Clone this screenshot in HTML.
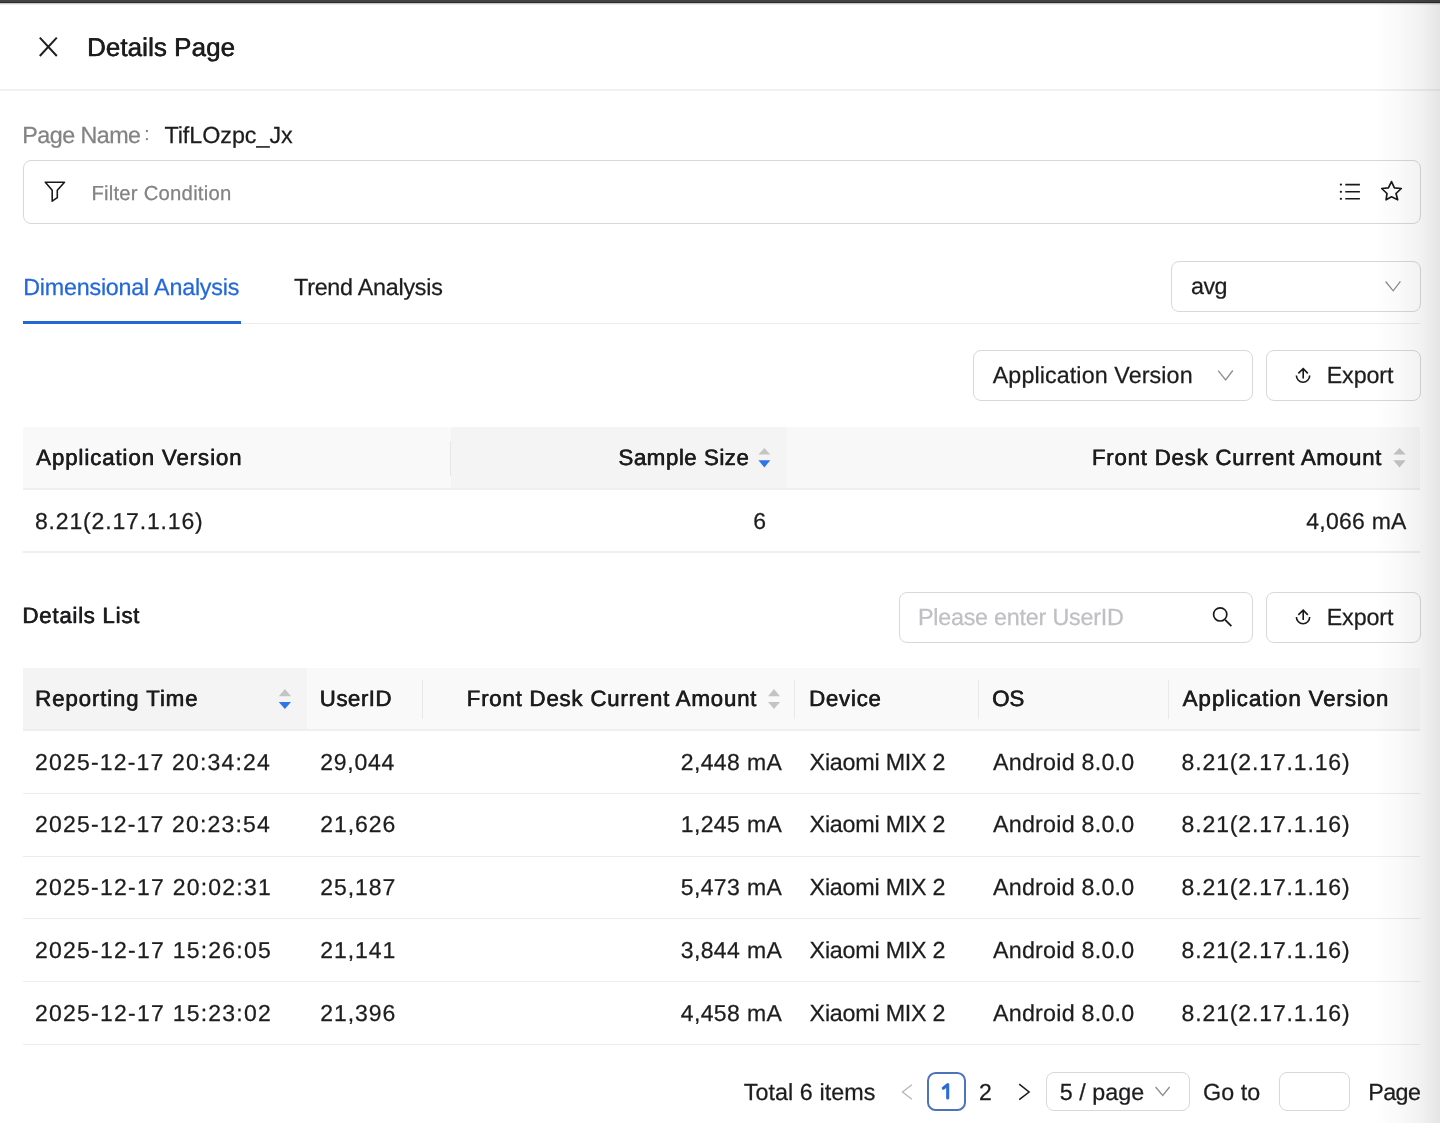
<!DOCTYPE html>
<html><head><meta charset="utf-8"><title>Details Page</title>
<style>
html,body{margin:0;padding:0;background:#fff;}
body{width:1440px;height:1123px;position:relative;overflow:hidden;font-family:"Liberation Sans",sans-serif;}
.t{position:absolute;white-space:nowrap;font-family:"Liberation Sans",sans-serif;text-rendering:geometricPrecision;}
.t{-webkit-text-stroke:0.25px currentColor;}
.m{-webkit-text-stroke:0.6px currentColor;}
.b{-webkit-text-stroke:0.35px currentColor;text-shadow:0.5px 0 0 currentColor;}
.r{position:absolute;box-sizing:border-box;}
.box{position:absolute;box-sizing:border-box;border:1.6px solid #d8d8d8;border-radius:8px;background:#fff;}
svg{position:absolute;left:0;top:0;}
</style></head><body>
<!-- top dark bar -->
<div class="r" style="left:0;top:0;width:1440px;height:5px;background:linear-gradient(#444 0,#444 2px,#2c2c2c 2px,#2c2c2c 3px,#c8c8c8 3px,#c8c8c8 3.6px,#fff 5px);"></div>
<!-- header border -->
<div class="r" style="left:0;top:89px;width:1440px;height:2px;background:#f1f1f1;"></div>
<!-- filter box -->
<div class="box" style="left:22.7px;top:160px;width:1398.1px;height:64px;border-radius:8px;"></div>
<!-- tabs line -->
<div class="r" style="left:23px;top:322.5px;width:1397px;height:1.5px;background:#ececec;"></div>
<div class="r" style="left:23px;top:321px;width:218px;height:3px;background:#2468d8;"></div>
<!-- avg select -->
<div class="box" style="left:1171px;top:261px;width:250px;height:51px;"></div>
<!-- app version select -->
<div class="box" style="left:973px;top:350px;width:280px;height:51px;"></div>
<!-- export 1 -->
<div class="box" style="left:1266px;top:350px;width:155px;height:51px;"></div>
<!-- table 1 -->
<div class="r" style="left:23px;top:427px;width:428px;height:61px;background:#f9f9f9;"></div>
<div class="r" style="left:451px;top:427px;width:336px;height:61px;background:#f4f4f4;"></div>
<div class="r" style="left:787px;top:427px;width:633px;height:61px;background:#f8f8f8;"></div>
<div class="r" style="left:450px;top:441px;width:1px;height:35px;background:#e6e6e6;"></div>
<div class="r" style="left:23px;top:488px;width:1397px;height:2px;background:#efefef;"></div>
<div class="r" style="left:23px;top:551px;width:1397px;height:2px;background:#efefef;"></div>
<!-- search + export 2 -->
<div class="box" style="left:899px;top:592px;width:354px;height:51px;"></div>
<div class="box" style="left:1266px;top:592px;width:155px;height:51px;"></div>
<!-- table 2 -->
<div class="r" style="left:23px;top:668px;width:284px;height:61px;background:#f4f4f4;"></div>
<div class="r" style="left:307px;top:668px;width:1113px;height:61px;background:#f9f9f9;"></div>
<div class="r" style="left:422px;top:680px;width:1px;height:39px;background:#e9e9e9;"></div>
<div class="r" style="left:794px;top:680px;width:1px;height:39px;background:#e9e9e9;"></div>
<div class="r" style="left:978px;top:680px;width:1px;height:39px;background:#e9e9e9;"></div>
<div class="r" style="left:1168px;top:680px;width:1px;height:39px;background:#e9e9e9;"></div>
<div class="r" style="left:23px;top:729px;width:1397px;height:2px;background:#efefef;"></div>
<div class="r" style="left:23px;top:792.7px;width:1397px;height:1.2px;background:#ececec;"></div>
<div class="r" style="left:23px;top:855.5px;width:1397px;height:1.2px;background:#ececec;"></div>
<div class="r" style="left:23px;top:918.3px;width:1397px;height:1.2px;background:#ececec;"></div>
<div class="r" style="left:23px;top:981.3px;width:1397px;height:1.2px;background:#ececec;"></div>
<div class="r" style="left:23px;top:1044px;width:1397px;height:1.2px;background:#ececec;"></div>
<!-- pagination -->
<div class="box" style="left:927px;top:1072px;width:39px;height:39px;border:2px solid #4d74bb;border-radius:8.6px;"></div>
<div class="box" style="left:1046px;top:1072px;width:144px;height:39px;border-radius:8px;"></div>
<div class="box" style="left:1279px;top:1072px;width:71px;height:39px;border-radius:8px;"></div>

<svg width="1440" height="1123" viewBox="0 0 1440 1123" fill="none">
 <!-- close X -->
 <path d="M39.8 37.6 L56.8 56 M56.8 37.6 L39.8 56" stroke="#1f1f1f" stroke-width="2"/>
 <circle cx="146.9" cy="131" r="1.2" fill="#8a8a8a"/><circle cx="146.9" cy="139.1" r="1.2" fill="#8a8a8a"/>
 <!-- filter -->
 <path d="M45.3 182.2 L64.5 182.2 L57.3 190.3 L57.3 197.7 L52.2 201.2 L52.2 190.3 Z" stroke="#1a1a1a" stroke-width="1.6" stroke-linejoin="round"/>
 <!-- list -->
 <g fill="#1a1a1a"><circle cx="1340.9" cy="184.6" r="1.15"/><circle cx="1340.9" cy="191.8" r="1.15"/><circle cx="1340.9" cy="198.8" r="1.15"/></g>
 <path d="M1345.3 184.6 H1359.9 M1345.3 191.8 H1359.9 M1345.3 198.8 H1359.9" stroke="#1a1a1a" stroke-width="1.6"/>
 <!-- star -->
 <path d="M1391.5 181.6 L1394.4 187.8 L1401.3 188.5 L1396 193.5 L1397.7 199.8 L1391.5 196.8 L1386.1 199.8 L1387 193.5 L1381.7 188.5 L1388.4 187.8 Z" stroke="#1a1a1a" stroke-width="1.7" stroke-linejoin="round"/>
 <!-- avg chevron -->
 <path d="M1385.6 281.5 L1393.2 290.8 L1400.4 281.4" stroke="#8c8c8c" stroke-width="1.3"/>
 <!-- app version chevron -->
 <path d="M1218.2 370.6 L1225.6 379.9 L1232.8 370.5" stroke="#8c8c8c" stroke-width="1.3"/>
 <!-- upload icon 1 -->
 <g stroke="#1a1a1a" stroke-width="1.6" stroke-linecap="butt">
  <path d="M1298.3 373.4 L1303.2 368.6 L1307.8 373.4 M1303.2 369.2 V378.5"/>
  <path d="M1296.4 375.6 A6.65 6.65 0 0 0 1309.7 375.6"/>
 </g>
 <!-- upload icon 2 -->
 <g stroke="#1a1a1a" stroke-width="1.6" transform="translate(0,241.5)">
  <path d="M1298.3 373.4 L1303.2 368.6 L1307.8 373.4 M1303.2 369.2 V378.5"/>
  <path d="M1296.4 375.6 A6.65 6.65 0 0 0 1309.7 375.6"/>
 </g>
 <!-- search -->
 <circle cx="1220.2" cy="614.4" r="6.6" stroke="#1a1a1a" stroke-width="1.7"/>
 <path d="M1225.2 619.9 L1231.4 626.1" stroke="#1a1a1a" stroke-width="1.8"/>
 <!-- sort icons -->
 <path d="M758.4 454.5 H770.3 L764.35 448.1 Z" fill="#c4c4c4"/>
 <path d="M758.4 460.2 H770.3 L764.35 467.4 Z" fill="#2f74e8"/>
 <path d="M1393.3 454.5 H1405.7 L1399.5 448.1 Z" fill="#c4c4c4"/>
 <path d="M1393.3 460.2 H1405.7 L1399.5 467.4 Z" fill="#c4c4c4"/>
 <path d="M278.75 696.25 H291 L284.9 689 Z" fill="#c4c4c4"/>
 <path d="M278.75 701.9 H291 L284.9 709 Z" fill="#2f74e8"/>
 <path d="M768 696.25 H780 L774 689 Z" fill="#c4c4c4"/>
 <path d="M768 701.9 H780 L774 709 Z" fill="#c4c4c4"/>
 <path d="M943.3 1088.2 L947.7 1084.6 L947.7 1098" stroke="#2b6cd5" stroke-width="3.1" stroke-linecap="round" stroke-linejoin="round"/>
 <!-- pagination arrows -->
 <path d="M911.9 1084.75 L902.5 1092 L911.9 1099.3" stroke="#b5b5b5" stroke-width="1.3"/>
 <path d="M1019.2 1084.2 L1029.1 1092 L1019.2 1099.7" stroke="#1a1a1a" stroke-width="1.5"/>
 <path d="M1155.6 1087 L1162.7 1095.5 L1169.6 1087" stroke="#8c8c8c" stroke-width="1.3"/>
</svg>
<div style="position:absolute;left:0;top:0;width:1440px;height:1123px;will-change:transform;">
<div class="t b" style="left:87.10px;top:34px;font-size:25.8px;line-height:28px;color:#1d1d1f;letter-spacing:0.126px;">Details Page</div>
<div class="t" style="left:22.30px;top:122px;font-size:23.3px;line-height:26px;color:#838383;letter-spacing:-0.534px;">Page Name</div>
<div class="t" style="left:164.40px;top:122px;font-size:23.3px;line-height:26px;color:#1d1d1f;letter-spacing:-0.035px;">TifLOzpc_Jx</div>
<div class="t" style="left:91.40px;top:183px;font-size:20.3px;line-height:22px;color:#838383;letter-spacing:0.232px;">Filter Condition</div>
<div class="t" style="left:23.20px;top:274px;font-size:23.3px;line-height:26px;color:#2468d8;letter-spacing:-0.209px;">Dimensional Analysis</div>
<div class="t" style="left:294.00px;top:274px;font-size:23.3px;line-height:26px;color:#1d1d1f;letter-spacing:-0.236px;">Trend Analysis</div>
<div class="t" style="left:1191.10px;top:273px;font-size:23.3px;line-height:26px;color:#1d1d1f;letter-spacing:-0.653px;">avg</div>
<div class="t" style="left:992.70px;top:362px;font-size:23.3px;line-height:26px;color:#1d1d1f;letter-spacing:0.100px;">Application Version</div>
<div class="t" style="left:1326.70px;top:362px;font-size:23.3px;line-height:26px;color:#1d1d1f;letter-spacing:-0.112px;">Export</div>
<div class="t b" style="left:36.00px;top:445px;font-size:22.3px;line-height:25px;color:#1d1d1f;letter-spacing:0.875px;">Application Version</div>
<div class="t b" style="left:618.30px;top:445px;font-size:22.3px;line-height:25px;color:#1d1d1f;letter-spacing:0.523px;">Sample Size</div>
<div class="t b" style="left:1091.70px;top:445px;font-size:22.3px;line-height:25px;color:#1d1d1f;letter-spacing:0.758px;">Front Desk Current Amount</div>
<div class="t" style="left:35.00px;top:508px;font-size:23.0px;line-height:26px;color:#1d1d1f;letter-spacing:0.833px;">8.21(2.17.1.16)</div>
<div class="t" style="left:753.30px;top:508px;font-size:23.0px;line-height:26px;color:#1d1d1f;">6</div>
<div class="t" style="left:1306.20px;top:508px;font-size:23.0px;line-height:26px;color:#1d1d1f;letter-spacing:0.256px;">4,066 mA</div>
<div class="t b" style="left:22.30px;top:603px;font-size:22.3px;line-height:25px;color:#1d1d1f;letter-spacing:0.714px;">Details List</div>
<div class="t" style="left:917.90px;top:604px;font-size:23.3px;line-height:26px;color:#c0c0c4;letter-spacing:-0.213px;">Please enter UserID</div>
<div class="t" style="left:1326.70px;top:604px;font-size:23.3px;line-height:26px;color:#1d1d1f;letter-spacing:-0.112px;">Export</div>
<div class="t b" style="left:35.00px;top:686px;font-size:22.3px;line-height:25px;color:#1d1d1f;letter-spacing:0.854px;">Reporting Time</div>
<div class="t b" style="left:319.60px;top:686px;font-size:22.3px;line-height:25px;color:#1d1d1f;letter-spacing:0.476px;">UserID</div>
<div class="t b" style="left:466.50px;top:686px;font-size:22.3px;line-height:25px;color:#1d1d1f;letter-spacing:0.766px;">Front Desk Current Amount</div>
<div class="t b" style="left:808.90px;top:686px;font-size:22.3px;line-height:25px;color:#1d1d1f;letter-spacing:0.729px;">Device</div>
<div class="t b" style="left:992.10px;top:686px;font-size:22.3px;line-height:25px;color:#1d1d1f;letter-spacing:-0.143px;">OS</div>
<div class="t b" style="left:1182.60px;top:686px;font-size:22.3px;line-height:25px;color:#1d1d1f;letter-spacing:0.887px;">Application Version</div>
<div class="t" style="left:35.00px;top:749px;font-size:23.0px;line-height:26px;color:#1d1d1f;letter-spacing:1.179px;">2025-12-17 20:34:24</div>
<div class="t" style="left:320.25px;top:749px;font-size:23.0px;line-height:26px;color:#1d1d1f;letter-spacing:0.759px;">29,044</div>
<div class="t" style="left:680.80px;top:749px;font-size:23.0px;line-height:26px;color:#1d1d1f;letter-spacing:0.356px;">2,448 mA</div>
<div class="t" style="left:809.60px;top:749px;font-size:23.3px;line-height:26px;color:#1d1d1f;letter-spacing:-0.234px;">Xiaomi MIX 2</div>
<div class="t" style="left:993.00px;top:749px;font-size:23.3px;line-height:26px;color:#1d1d1f;letter-spacing:0.222px;">Android 8.0.0</div>
<div class="t" style="left:1181.60px;top:749px;font-size:23.0px;line-height:26px;color:#1d1d1f;letter-spacing:0.861px;">8.21(2.17.1.16)</div>
<div class="t" style="left:35.00px;top:811px;font-size:23.0px;line-height:26px;color:#1d1d1f;letter-spacing:1.179px;">2025-12-17 20:23:54</div>
<div class="t" style="left:320.25px;top:811px;font-size:23.0px;line-height:26px;color:#1d1d1f;letter-spacing:0.959px;">21,626</div>
<div class="t" style="left:680.80px;top:811px;font-size:23.0px;line-height:26px;color:#1d1d1f;letter-spacing:0.356px;">1,245 mA</div>
<div class="t" style="left:809.60px;top:811px;font-size:23.3px;line-height:26px;color:#1d1d1f;letter-spacing:-0.234px;">Xiaomi MIX 2</div>
<div class="t" style="left:993.00px;top:811px;font-size:23.3px;line-height:26px;color:#1d1d1f;letter-spacing:0.222px;">Android 8.0.0</div>
<div class="t" style="left:1181.60px;top:811px;font-size:23.0px;line-height:26px;color:#1d1d1f;letter-spacing:0.861px;">8.21(2.17.1.16)</div>
<div class="t" style="left:35.00px;top:874px;font-size:23.0px;line-height:26px;color:#1d1d1f;letter-spacing:1.235px;">2025-12-17 20:02:31</div>
<div class="t" style="left:320.25px;top:874px;font-size:23.0px;line-height:26px;color:#1d1d1f;letter-spacing:0.959px;">25,187</div>
<div class="t" style="left:680.80px;top:874px;font-size:23.0px;line-height:26px;color:#1d1d1f;letter-spacing:0.356px;">5,473 mA</div>
<div class="t" style="left:809.60px;top:874px;font-size:23.3px;line-height:26px;color:#1d1d1f;letter-spacing:-0.234px;">Xiaomi MIX 2</div>
<div class="t" style="left:993.00px;top:874px;font-size:23.3px;line-height:26px;color:#1d1d1f;letter-spacing:0.222px;">Android 8.0.0</div>
<div class="t" style="left:1181.60px;top:874px;font-size:23.0px;line-height:26px;color:#1d1d1f;letter-spacing:0.861px;">8.21(2.17.1.16)</div>
<div class="t" style="left:35.00px;top:937px;font-size:23.0px;line-height:26px;color:#1d1d1f;letter-spacing:1.235px;">2025-12-17 15:26:05</div>
<div class="t" style="left:320.25px;top:937px;font-size:23.0px;line-height:26px;color:#1d1d1f;letter-spacing:0.959px;">21,141</div>
<div class="t" style="left:680.80px;top:937px;font-size:23.0px;line-height:26px;color:#1d1d1f;letter-spacing:0.356px;">3,844 mA</div>
<div class="t" style="left:809.60px;top:937px;font-size:23.3px;line-height:26px;color:#1d1d1f;letter-spacing:-0.234px;">Xiaomi MIX 2</div>
<div class="t" style="left:993.00px;top:937px;font-size:23.3px;line-height:26px;color:#1d1d1f;letter-spacing:0.222px;">Android 8.0.0</div>
<div class="t" style="left:1181.60px;top:937px;font-size:23.0px;line-height:26px;color:#1d1d1f;letter-spacing:0.861px;">8.21(2.17.1.16)</div>
<div class="t" style="left:35.00px;top:1000px;font-size:23.0px;line-height:26px;color:#1d1d1f;letter-spacing:1.235px;">2025-12-17 15:23:02</div>
<div class="t" style="left:320.25px;top:1000px;font-size:23.0px;line-height:26px;color:#1d1d1f;letter-spacing:0.959px;">21,396</div>
<div class="t" style="left:680.80px;top:1000px;font-size:23.0px;line-height:26px;color:#1d1d1f;letter-spacing:0.356px;">4,458 mA</div>
<div class="t" style="left:809.60px;top:1000px;font-size:23.3px;line-height:26px;color:#1d1d1f;letter-spacing:-0.234px;">Xiaomi MIX 2</div>
<div class="t" style="left:993.00px;top:1000px;font-size:23.3px;line-height:26px;color:#1d1d1f;letter-spacing:0.222px;">Android 8.0.0</div>
<div class="t" style="left:1181.60px;top:1000px;font-size:23.0px;line-height:26px;color:#1d1d1f;letter-spacing:0.861px;">8.21(2.17.1.16)</div>
<div class="t" style="left:743.70px;top:1079px;font-size:23.3px;line-height:26px;color:#1d1d1f;letter-spacing:0.073px;">Total 6 items</div>
<div class="t" style="left:979.10px;top:1079px;font-size:23.0px;line-height:26px;color:#1d1d1f;">2</div>
<div class="t" style="left:1059.70px;top:1079px;font-size:23.3px;line-height:26px;color:#1d1d1f;letter-spacing:0.051px;">5 / page</div>
<div class="t" style="left:1203.00px;top:1079px;font-size:23.3px;line-height:26px;color:#1d1d1f;letter-spacing:0.044px;">Go to</div>
<div class="t" style="left:1368.30px;top:1079px;font-size:23.3px;line-height:26px;color:#1d1d1f;letter-spacing:-0.584px;">Page</div>
</div>
<!-- right edge shade -->
<div class="r" style="left:1374px;top:0;width:66px;height:1123px;background:linear-gradient(90deg,rgba(0,0,0,0) 0,rgba(0,0,0,0.018) 35%,rgba(0,0,0,0.05) 70%,rgba(0,0,0,0.1) 100%);"></div>
</body></html>
